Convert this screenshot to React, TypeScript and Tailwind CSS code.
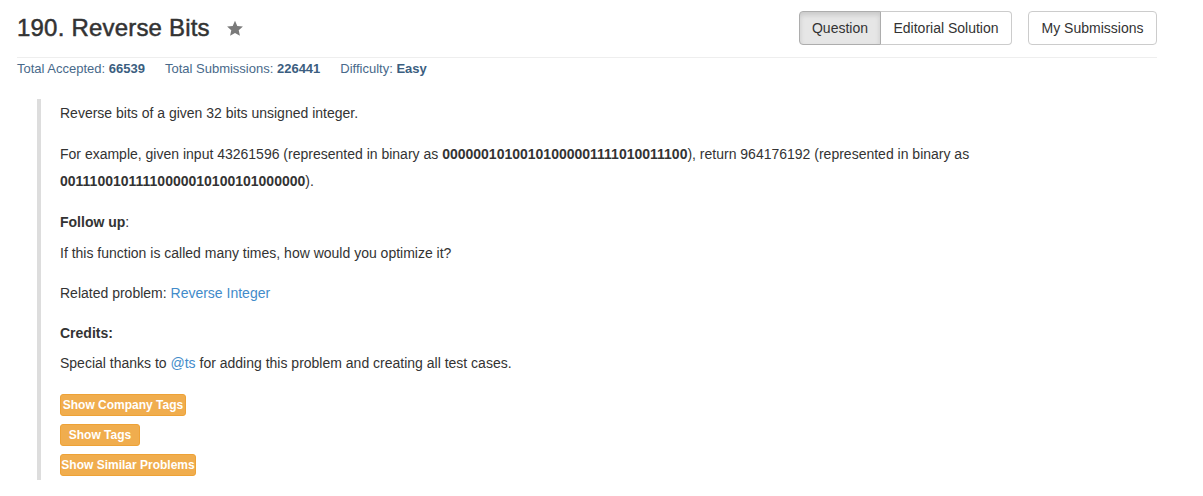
import React from "react";

function Star() {
  return (
    <svg width="20" height="19" viewBox="0 0 24 24" className="ml-[15px] mt-[1px]">
      <path
        d="M12 2.2l2.9 6.5 7.1.7-5.3 4.8 1.5 7-6.2-3.6-6.2 3.6 1.5-7L2 9.4l7.1-.7z"
        fill="#7a7a7a"
      />
    </svg>
  );
}

export default function App() {
  return (
    <div className="bg-white w-[1203px] h-[496px] overflow-hidden font-['Liberation_Sans',Arial,sans-serif] text-[#333]">
      <div className="ml-[17px] w-[1140px]">
        <div className="flex items-start justify-between pt-[11px]">
          <div className="flex items-center h-[34px]">
            <h3 className="text-[24px] leading-[26px] font-normal text-[#333] tracking-[0.2px] [-webkit-text-stroke:0.5px_#333]">
              190. Reverse Bits
            </h3>
            <Star />
          </div>
          <div className="flex items-center">
            <div className="flex">
              <button className="h-[34px] w-[82px] text-[14px] text-[#333] bg-[#e6e6e6] border border-[#adadad] rounded-l-[4px] shadow-[inset_0_3px_5px_rgba(0,0,0,0.125)]">
                Question
              </button>
              <button className="h-[34px] w-[131px] text-[14px] text-[#333] bg-white border border-l-0 border-[#ccc] rounded-r-[4px]">
                Editorial Solution
              </button>
            </div>
            <button className="ml-[16px] h-[34px] w-[129px] text-[14px] text-[#333] bg-white border border-[#ccc] rounded-[4px]">
              My Submissions
            </button>
          </div>
        </div>
        <div className="mt-[12px] border-t border-[#eee]" />
        <div className="flex gap-[20px] mt-[2px] text-[13px] leading-[18px] text-[#48698a]">
          <span>
            Total Accepted: <b className="text-[#3b5e80]">66539</b>
          </span>
          <span>
            Total Submissions: <b className="text-[#3b5e80]">226441</b>
          </span>
          <span>
            Difficulty: <b className="text-[#3b5e80]">Easy</b>
          </span>
        </div>
        <div className="mt-[21px] ml-[20px] border-l-[4px] border-[#ddd] pl-[19px] pt-[1px] pb-[4px] text-[14px] leading-[27px]">
          <p>Reverse bits of a given 32 bits unsigned integer.</p>
          <p className="mt-[14px]">
            For example, given input 43261596 (represented in binary as{" "}
            <b>00000010100101000001111010011100</b>), return 964176192 (represented in binary as
            <br />
            <b>00111001011110000010100101000000</b>).
          </p>
          <p className="mt-[14px]">
            <b>Follow up</b>:
          </p>
          <p className="mt-[4px]">If this function is called many times, how would you optimize it?</p>
          <p className="mt-[13px]">
            Related problem: <a className="text-[#428bca]">Reverse Integer</a>
          </p>
          <p className="mt-[13px]">
            <b>Credits:</b>
          </p>
          <p className="mt-[3px]">
            Special thanks to <a className="text-[#428bca]">@ts</a> for adding this problem and creating all test cases.
          </p>
          <div className="mt-[17px] flex flex-col items-start gap-[8px]">
            <button className="h-[22px] w-[126px] rounded-[3px] bg-[#f0ad4e] border border-[#eea236] text-white text-[12px] font-bold leading-[20px]">
              Show Company Tags
            </button>
            <button className="h-[22px] w-[80px] rounded-[3px] bg-[#f0ad4e] border border-[#eea236] text-white text-[12px] font-bold leading-[20px]">
              Show Tags
            </button>
            <button className="h-[22px] w-[136px] rounded-[3px] bg-[#f0ad4e] border border-[#eea236] text-white text-[12px] font-bold leading-[20px]">
              Show Similar Problems
            </button>
          </div>
        </div>
      </div>
    </div>
  );
}
